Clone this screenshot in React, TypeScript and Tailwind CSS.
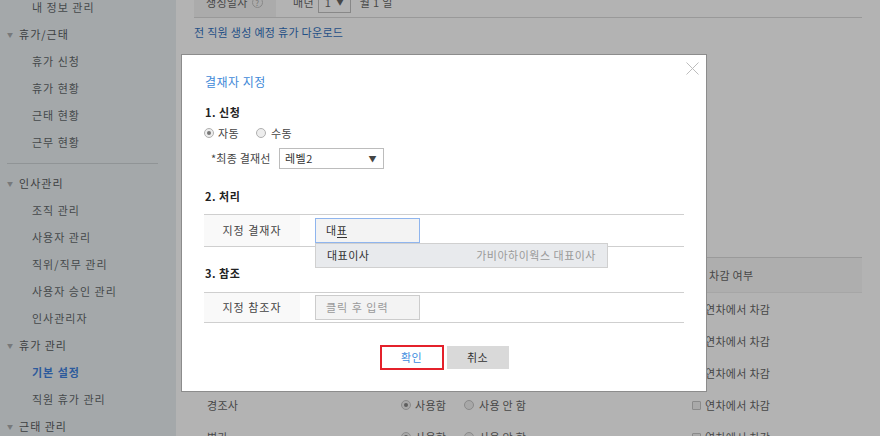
import { ReactNode } from "react";

const font = { fontFamily: '"Noto Sans CJK KR", "Noto Sans", sans-serif' };

type NavRow = { label: string; kind: "head" | "item" | "divider"; active?: boolean };

const nav: NavRow[] = [
  { label: "내 정보 관리", kind: "item" },
  { label: "휴가/근태", kind: "head" },
  { label: "휴가 신청", kind: "item" },
  { label: "휴가 현황", kind: "item" },
  { label: "근태 현황", kind: "item" },
  { label: "근무 현황", kind: "item" },
  { label: "", kind: "divider" },
  { label: "인사관리", kind: "head" },
  { label: "조직 관리", kind: "item" },
  { label: "사용자 관리", kind: "item" },
  { label: "직위/직무 관리", kind: "item" },
  { label: "사용자 승인 관리", kind: "item" },
  { label: "인사관리자", kind: "item" },
  { label: "휴가 관리", kind: "head" },
  { label: "기본 설정", kind: "item", active: true },
  { label: "직원 휴가 관리", kind: "item" },
  { label: "근태 관리", kind: "head" }
];

// first three rows sit under the modal, only their last column peeks out
const leaveRows = [
  { name: "", covered: true },
  { name: "", covered: true },
  { name: "", covered: true },
  { name: "경조사", covered: false },
  { name: "병가", covered: false }
];

const Radio = ({ checked, dim }: { checked?: boolean; dim?: boolean }) => (
  <span
    className={`inline-flex h-[10px] w-[10px] items-center justify-center rounded-full border ${
      dim ? "border-[#8a8a8a] bg-[#a8a8a8]" : "border-[#b0b0b0] bg-[#ededed]"
    }`}
  >
    {checked && <span className={`h-[4px] w-[4px] rounded-full ${dim ? "bg-[#5e5e5e]" : "bg-[#777]"}`} />}
  </span>
);

const FormRow = ({ label, children }: { label: string; children: ReactNode }) => (
  <div className="flex border-y border-[#cfcfcf]">
    <div className="flex w-[96px] items-center justify-center bg-[#f9f9f9] tracking-[1px] text-[#444]">{label}</div>
    <div className="flex flex-1 items-center pl-[15px]">{children}</div>
  </div>
);

const Sidebar = () => (
  <aside className="w-[176px] shrink-0 bg-[#a4a8aa] text-[11px] tracking-[1px] text-[#45484a]">
    <div className="-mt-[6px]">
      {nav.map((row, i) => {
        if (row.kind === "divider") {
          return (
            <div key={i} className="flex h-[14px] items-center pl-[7px]">
              <div className="h-px w-[151px] bg-[#909496]" />
            </div>
          );
        }
        if (row.kind === "head") {
          return (
            <div key={i} className="flex h-[27px] items-center pl-[7px] text-[#3d4042]">
              <span className="mr-[5px] text-[6px] text-[#77797b]">▼</span>
              {row.label}
            </div>
          );
        }
        return (
          <div
            key={i}
            className={`flex h-[27px] items-center pl-[32px] ${row.active ? "font-semibold text-[#2c5a9c]" : ""}`}
          >
            {row.label}
          </div>
        );
      })}
    </div>
  </aside>
);

const Background = () => (
  <main className="flex-1 px-[18px] text-[11px] tracking-[0.3px] text-[#474747]">
    <div className="-mt-[12px] flex h-[30px] items-center border-b border-[#999]">
      <div className="flex h-full w-[82px] items-center gap-[4px] bg-[#ababab] pl-[12px]">
        생성일자
        <span className="flex h-[11px] w-[11px] items-center justify-center rounded-full border border-[#888] text-[8px] text-[#777]">
          ?
        </span>
      </div>
      <div className="ml-[17px] flex items-center">
        매년
        <span className="ml-[4px] flex h-[20px] w-[33px] items-center justify-between border border-[#888] px-[6px] text-[7px]">
          <span className="text-[11px]">1</span>▼
        </span>
        <span className="ml-[9px]">월 1 일</span>
      </div>
    </div>
    <div className="flex h-[28px] items-center text-[#1f4f86]">전 직원 생성 예정 휴가 다운로드</div>

    <div className="mt-[211px] border-t border-[#9a9a9a]">
      <div className="flex h-[35px] items-center border-b border-[#a6a6a6] bg-[#aeaeae]">
        <div className="w-[200px]" />
        <div className="w-[286px]" />
        <div className="pl-[29px]">차감 여부</div>
      </div>
      {leaveRows.map((row, i) => (
        <div key={i} className="flex h-[32px] items-center">
          <div className="w-[200px] pl-[13px]">{row.name}</div>
          <div className="flex w-[286px] items-center pl-[7px]">
            {!row.covered && (
              <>
                <span className="flex w-[63px] items-center gap-[4px]">
                  <Radio checked dim />
                  사용함
                </span>
                <span className="flex items-center gap-[5px]">
                  <Radio dim />
                  사용 안 함
                </span>
              </>
            )}
          </div>
          <div className="flex items-center gap-[4px] pl-[12px]">
            <span className="h-[9px] w-[9px] rounded-[1px] border border-[#8a8a8a] bg-[#a9a9a9]" />
            연차에서 차감
          </div>
        </div>
      ))}
    </div>
  </main>
);

const ApproverModal = () => (
  <div className="absolute left-[181px] top-[54px] h-[338px] w-[526px] border border-[#8c8c8c] bg-white px-[22px] pt-[17px] text-[11px] tracking-[0.5px] text-[#444]">
    <button className="absolute right-[7px] top-[7px] h-[13px] w-[13px]">
      <svg viewBox="0 0 13 13" width="13" height="13">
        <path d="M0.5 0.5 L12.5 12.5 M12.5 0.5 L0.5 12.5" stroke="#bdbdbd" strokeWidth="1" fill="none" />
      </svg>
    </button>

    <h2 className="h-[20px] pl-px text-[12px] leading-[20px] text-[#3f8ad8]">결재자 지정</h2>

    <h3 className="mt-[11px] h-[18px] pl-px font-bold leading-[18px] text-[#222]">1. 신청</h3>
    <div className="mt-[3px] flex h-[18px] items-center">
      <span className="flex w-[52px] items-center gap-[4px]">
        <Radio checked />
        자동
      </span>
      <span className="flex items-center gap-[5px]">
        <Radio />
        수동
      </span>
    </div>
    <div className="mt-[6px] flex h-[21px] items-center pl-[7px]">
      <span className="w-[68px] tracking-[0.2px]">*최종 결재선</span>
      <span className="flex h-full w-[105px] items-center justify-between border border-[#bcbcbc] pl-[5px] pr-[6px] text-[#333]">
        레벨2
        <span className="text-[8px] text-[#444]">▼</span>
      </span>
    </div>

    <h3 className="mt-[18px] h-[18px] pl-px font-bold leading-[18px] text-[#222]">2. 처리</h3>
    <div className="relative mt-[9px]">
      <FormRow label="지정 결재자">
        <div className="my-[3px] flex h-[25px] w-[105px] items-center border border-[#8fb5ee] bg-[#f3f3f3] pl-[10px] text-[#333]">
          대<span className="border-b border-[#333] leading-[13px]">표</span>
        </div>
      </FormRow>
      <div className="absolute left-[111px] top-[29px] flex h-[25px] w-[293px] items-center justify-between border border-[#d0d0d0] bg-[#e8eaed] pl-[11px] pr-[11px]">
        <span className="text-[#333]">대표이사</span>
        <span className="text-[#9a9a9a]">가비아하이웍스 대표이사</span>
      </div>
    </div>

    <h3 className="mt-[17px] h-[18px] pl-px font-bold leading-[18px] text-[#222]">3. 참조</h3>
    <div className="mt-[10px]">
      <FormRow label="지정 참조자">
        <div className="my-[2px] flex h-[25px] w-[105px] items-center border border-[#cccccc] bg-[#f3f3f3] pl-[10px] tracking-[1px] text-[#999]">
          클릭 후 입력
        </div>
      </FormRow>
    </div>

    <div className="mt-[22px] flex items-start justify-center gap-[3px]">
      <button className="h-[25px] w-[64px] border-2 border-[#e4212b] bg-white text-[#3c8de0]">확인</button>
      <button className="mt-px h-[23px] w-[62px] bg-[#d9d9d9] text-[#333]">취소</button>
    </div>
  </div>
);

export default function App() {
  return (
    <div className="relative flex h-[436px] w-[880px] overflow-hidden bg-[#b3b3b3]" style={font}>
      <Sidebar />
      <Background />
      <ApproverModal />
    </div>
  );
}
